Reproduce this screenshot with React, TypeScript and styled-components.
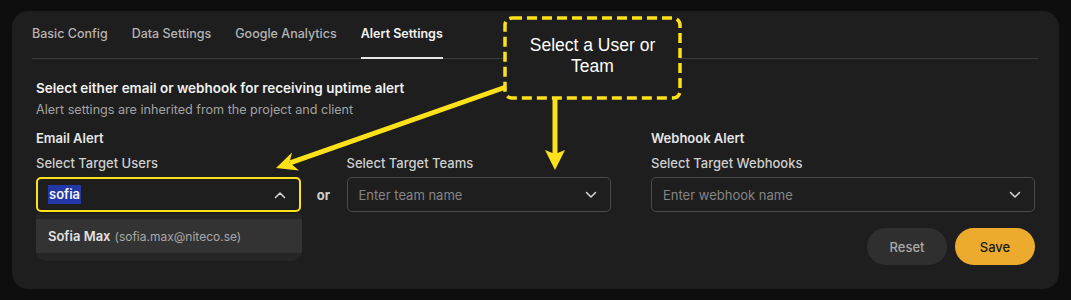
import React from "react";
import styled, { createGlobalStyle } from "styled-components";

const GlobalStyle = createGlobalStyle`
  html, body {
    margin: 0;
    padding: 0;
    background: #0e0e0e;
  }
  body {
    font-family: Inter, "Noto Sans", sans-serif;
    -webkit-font-smoothing: antialiased;
  }
`;

const YELLOW = "#fde11b";

const tabs = ["Basic Config", "Data Settings", "Google Analytics", "Alert Settings"];

const ChevronIcon = ({ up }: { up?: boolean }) => (
  <svg width="12" height="8" viewBox="0 0 12 8" fill="none">
    <path
      d={up ? "M1.5 6.5L6 2l4.5 4.5" : "M1.5 1.5L6 6l4.5-4.5"}
      stroke="#d6d6d6"
      strokeWidth="1.5"
      strokeLinecap="round"
      strokeLinejoin="round"
    />
  </svg>
);

const App = () => {
  return (
    <>
      <GlobalStyle />
      <PageStyled>
        <CardStyled>
          <TabBarStyled>
            {tabs.map((tab) => (
              <TabStyled key={tab} active={tab === "Alert Settings"}>
                {tab}
              </TabStyled>
            ))}
          </TabBarStyled>

          <ContentStyled>
            <HeadingStyled>
              Select either email or webhook for receiving uptime alert
            </HeadingStyled>
            <SubtitleStyled>
              Alert settings are inherited from the project and client
            </SubtitleStyled>

            <FieldsRowStyled>
              <EmailGroupStyled>
                <GroupTitleStyled>Email Alert</GroupTitleStyled>
                <EmailFieldsStyled>
                  <FieldStyled>
                    <LabelStyled>Select Target Users</LabelStyled>
                    <SelectBoxStyled highlighted>
                      <SelectedTextStyled>sofia</SelectedTextStyled>
                      <ChevronIcon up />
                    </SelectBoxStyled>
                    <MenuStyled>
                      <OptionStyled>
                        <OptionNameStyled>Sofia Max</OptionNameStyled>
                        <OptionEmailStyled>(sofia.max@niteco.se)</OptionEmailStyled>
                      </OptionStyled>
                    </MenuStyled>
                  </FieldStyled>
                  <OrStyled>or</OrStyled>
                  <FieldStyled>
                    <LabelStyled>Select Target Teams</LabelStyled>
                    <SelectBoxStyled>
                      <PlaceholderStyled>Enter team name</PlaceholderStyled>
                      <ChevronIcon />
                    </SelectBoxStyled>
                  </FieldStyled>
                </EmailFieldsStyled>
              </EmailGroupStyled>

              <WebhookGroupStyled>
                <GroupTitleStyled>Webhook Alert</GroupTitleStyled>
                <FieldStyled>
                  <LabelStyled>Select Target Webhooks</LabelStyled>
                  <SelectBoxStyled>
                    <PlaceholderStyled>Enter webhook name</PlaceholderStyled>
                    <ChevronIcon />
                  </SelectBoxStyled>
                </FieldStyled>
              </WebhookGroupStyled>
            </FieldsRowStyled>

            <ActionsStyled>
              <ButtonStyled>Reset</ButtonStyled>
              <ButtonStyled primary>Save</ButtonStyled>
            </ActionsStyled>
          </ContentStyled>
        </CardStyled>

        {/* annotation overlay */}
        <AnnotationSvgStyled width="1071" height="300" viewBox="0 0 1071 300">
          <rect
            x="505"
            y="18"
            width="175"
            height="80"
            rx="7"
            fill="#1e1e1e"
            stroke={YELLOW}
            strokeWidth="3.5"
            strokeDasharray="10 5"
          />
          <line x1="506" y1="87" x2="290" y2="162.8" stroke={YELLOW} strokeWidth="5" />
          <polygon points="276,168 292,152.5 289.5,162.5 299,170.5" fill={YELLOW} />
          <line x1="555" y1="99" x2="555" y2="156" stroke={YELLOW} strokeWidth="5" />
          <polygon points="555,170 545,150 555,154 565,150" fill={YELLOW} />
        </AnnotationSvgStyled>
        <CalloutTextStyled>Select a User or Team</CalloutTextStyled>
      </PageStyled>
    </>
  );
};

const PageStyled = styled.div`
  position: relative;
  width: 1071px;
  height: 300px;
  padding: 11px 12px;
  box-sizing: border-box;
`;

const CardStyled = styled.div`
  background: #1e1e1e;
  border-radius: 16px;
  height: 278px;
  padding: 0 21px 0 20px;
  box-sizing: border-box;
`;

const TabBarStyled = styled.div`
  display: flex;
  gap: 24px;
  border-bottom: 1px solid #3c3c3c;
  padding-top: 15px;
`;

const TabStyled = styled.div<{ active?: boolean }>`
  font-size: 12.5px;
  line-height: 16px;
  font-weight: ${(props) => (props.active ? 600 : 500)};
  color: ${(props) => (props.active ? "#f2f2f2" : "#b4b4b4")};
  padding-bottom: 15px;
  margin-bottom: -1px;
  border-bottom: 2px solid
    ${(props) => (props.active ? "#e6e6e6" : "transparent")};
`;

const ContentStyled = styled.div`
  padding: 21px 3px 0 4px;
`;

const HeadingStyled = styled.div`
  font-size: 13.5px;
  line-height: 16px;
  font-weight: 600;
  color: #f0f0f0;
`;

const SubtitleStyled = styled.div`
  margin-top: 6px;
  font-size: 12.6px;
  line-height: 16px;
  color: #a2a2a2;
`;

const FieldsRowStyled = styled.div`
  display: flex;
  gap: 40px;
  margin-top: 12px;
`;

const EmailGroupStyled = styled.div`
  flex: 0 0 575px;
`;

const WebhookGroupStyled = styled.div`
  flex: 1;
`;

const GroupTitleStyled = styled.div`
  font-size: 13px;
  line-height: 16px;
  font-weight: 600;
  color: #e6e6e6;
  margin-bottom: 9px;
`;

const EmailFieldsStyled = styled.div`
  display: grid;
  grid-template-columns: 1fr 46px 1fr;
  align-items: end;
`;

const FieldStyled = styled.div`
  position: relative;
  display: flex;
  flex-direction: column;
  gap: 6px;
`;

const LabelStyled = styled.div`
  font-size: 13px;
  line-height: 16px;
  font-weight: 500;
  color: #cfcfcf;
`;

const SelectBoxStyled = styled.div<{ highlighted?: boolean }>`
  display: flex;
  align-items: center;
  justify-content: space-between;
  height: 35px;
  box-sizing: border-box;
  padding: 0 13px 0 11px;
  border: ${(props) =>
    props.highlighted ? `2px solid ${YELLOW}` : "1px solid #4a4a4a"};
  border-radius: 5px;
  padding-left: ${(props) => (props.highlighted ? "10px" : "11px")};
  background: #1e1e1e;
`;

const SelectedTextStyled = styled.span`
  background: #2437a6;
  color: #f4f4f4;
  font-size: 13px;
  font-weight: 600;
  line-height: 19px;
  padding: 0 1px;
`;

const PlaceholderStyled = styled.span`
  font-size: 13px;
  color: #858585;
`;

const MenuStyled = styled.div`
  position: absolute;
  top: 100%;
  left: 0;
  right: -1px;
  margin-top: 2px;
  padding: 5px 0 8px;
  background: #262626;
  border-radius: 0 0 10px 10px;
  z-index: 2;
`;

const OptionStyled = styled.div`
  display: flex;
  align-items: baseline;
  gap: 4px;
  height: 34px;
  line-height: 34px;
  padding: 0 12px;
  background: #333333;
`;

const OptionNameStyled = styled.span`
  font-size: 13px;
  font-weight: 600;
  color: #e2e2e2;
`;

const OptionEmailStyled = styled.span`
  font-size: 12px;
  color: #a8a8a8;
`;

const OrStyled = styled.div`
  height: 35px;
  display: flex;
  align-items: center;
  justify-content: center;
  font-size: 13px;
  font-weight: 700;
  color: #cfcfcf;
`;

const ActionsStyled = styled.div`
  display: flex;
  justify-content: flex-end;
  gap: 8px;
  margin-top: 16px;
`;

const ButtonStyled = styled.button<{ primary?: boolean }>`
  width: 80px;
  height: 37px;
  border: none;
  border-radius: 19px;
  font-family: inherit;
  font-size: 13px;
  font-weight: 500;
  background: ${(props) => (props.primary ? "#ecab2c" : "#2f2f2f")};
  color: ${(props) => (props.primary ? "#1a1a1a" : "#a9a9a9")};
  cursor: pointer;
`;

const AnnotationSvgStyled = styled.svg`
  position: absolute;
  top: 0;
  left: 0;
  pointer-events: none;
  z-index: 5;
`;

const CalloutTextStyled = styled.div`
  position: absolute;
  left: 505px;
  top: 18px;
  width: 175px;
  height: 80px;
  box-sizing: border-box;
  padding: 0 10px 4px;
  display: flex;
  align-items: center;
  justify-content: center;
  text-align: center;
  font-family: "Liberation Sans", Arial, sans-serif;
  font-size: 17.5px;
  line-height: 21px;
  color: #ffffff;
  z-index: 6;
`;

export default App;
